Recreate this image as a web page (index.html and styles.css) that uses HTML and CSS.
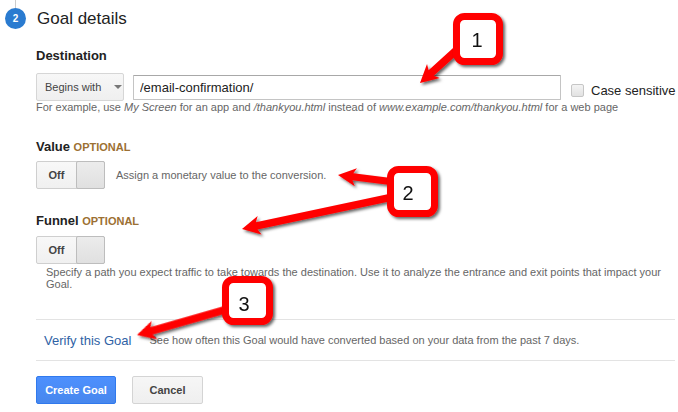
FILE: index.html
```html
<!DOCTYPE html>
<html lang="en">
<head>
  <meta charset="UTF-8">
  <meta name="viewport" content="width=device-width, initial-scale=1.0">
  <title>Goal details</title>

  <!-- Stylesheet -->
  <link rel="stylesheet" href="styles.css">
</head>
<body>
  <div class="page">
    <!-- Step header -->
    <div class="rail"></div>
    <div class="step-head">
      <span class="step-num">2</span>
      <h2 class="step-title">Goal details</h2>
    </div>

    <div class="step-body">
      <!-- Destination -->
      <div class="field-label first">Destination</div>
      <div class="dest-row">
        <div class="select">Begins with<span class="caret"></span></div>
        <input class="text-input" type="text" value="/email-confirmation/">
        <label class="check-label"><input type="checkbox" class="check">Case sensitive</label>
      </div>
      <p class="hint">For example, use <i>My Screen</i> for an app and <i>/thankyou.html</i> instead of <i>www.example.com/thankyou.html</i> for a web page</p>

      <!-- Value -->
      <div class="field-label value-label">Value <span class="optional">OPTIONAL</span></div>
      <div class="toggle-row">
        <div class="toggle"><span class="toggle-off">Off</span><span class="toggle-knob"></span></div>
        <span class="toggle-note">Assign a monetary value to the conversion.</span>
      </div>

      <!-- Funnel -->
      <div class="field-label funnel-label">Funnel <span class="optional">OPTIONAL</span></div>
      <div class="toggle-row funnel-toggle">
        <div class="toggle"><span class="toggle-off">Off</span><span class="toggle-knob"></span></div>
      </div>
      <p class="funnel-hint">Specify a path you expect traffic to take towards the destination. Use it to analyze the entrance and exit points that impact your Goal.</p>

      <!-- Verify -->
      <div class="verify">
        <a class="verify-link" href="#">Verify this Goal</a>
        <span class="verify-note">See how often this Goal would have converted based on your data from the past 7 days.</span>
      </div>

      <!-- Buttons -->
      <div class="actions">
        <button class="btn btn-primary">Create Goal</button>
        <button class="btn">Cancel</button>
      </div>
    </div>

    <!-- Annotation callouts drawn over the form -->
    <svg class="callouts" width="678" height="412" viewBox="0 0 678 412">
      <defs>
        <filter id="shade" x="-20%" y="-20%" width="150%" height="150%">
          <feDropShadow dx="2" dy="2" stdDeviation="1.4" flood-color="#000" flood-opacity="0.6"/>
        </filter>
      </defs>
      <g fill="#ff0000" filter="url(#shade)">
        <path transform="translate(420,83) rotate(-42)" d="M0,0 L18,-9.5 L15,-3.8 L55,-3.8 L55,3.8 L15,3.8 L18,9.5 Z"/>
        <path transform="translate(338,175) rotate(7)" d="M0,0 L18,-9 L15,-3.5 L55,-3.5 L55,3.5 L15,3.5 L18,9 Z"/>
        <path transform="translate(242,229) rotate(-12)" d="M0,0 L18,-9.5 L15,-3.8 L152,-3.8 L152,3.8 L15,3.8 L18,9.5 Z"/>
        <path transform="translate(137,335) rotate(-16)" d="M0,0 L18,-9.5 L15,-3.8 L92,-3.8 L92,3.8 L15,3.8 L18,9.5 Z"/>
      </g>
      <g fill="#fff" stroke="#ff0000" stroke-width="7" filter="url(#shade)">
        <rect x="456.5" y="16.5" width="43" height="45" rx="8"/>
        <rect x="390.5" y="169.5" width="44" height="44" rx="8"/>
        <rect x="225.5" y="279.5" width="44" height="42" rx="8"/>
      </g>
      <g class="callout-num" text-anchor="middle">
        <text x="477" y="47">1</text>
        <text x="408" y="200">2</text>
        <text x="244" y="311">3</text>
      </g>
    </svg>
  </div>
</body>
</html>
```

FILE: styles.css
```css
/* Page base */
body {
  margin: 0;
  background: #fff;
  font-family: 'Liberation Sans', Arial, sans-serif;
  color: #222;
}

.page {
  position: relative;
  width: 678px;
  height: 412px;
  overflow: hidden;
}

/* Step header */
.rail {
  width: 1px;
  height: 8px;
  margin-left: 15px;
  background: #ccc;
}

.step-head {
  display: flex;
  align-items: center;
  height: 21px;
}

.step-num {
  width: 21px;
  height: 21px;
  margin-left: 5px;
  border-radius: 50%;
  background: #2a7bd0;
  color: #fff;
  font-size: 10px;
  font-weight: bold;
  line-height: 21px;
  text-align: center;
}

.step-title {
  margin: 0 0 0 11px;
  font-size: 17px;
  font-weight: normal;
  line-height: 21px;
  color: #222;
}

/* Form body */
.step-body {
  width: 639px;
  padding-left: 36px;
}

.field-label {
  font-size: 13px;
  font-weight: bold;
  line-height: 16px;
  color: #222;
}

.field-label.first {
  margin-top: 19px;
}

.value-label {
  margin-top: 25px;
}

.funnel-label {
  margin-top: 24px;
}

.optional {
  font-size: 11px;
  color: #9c7032;
}

/* Destination row */
.dest-row {
  display: flex;
  align-items: center;
  margin-top: 9px;
  height: 28px;
}

.select {
  display: flex;
  align-items: center;
  flex-shrink: 0;
  box-sizing: border-box;
  width: 88px;
  height: 28px;
  padding-left: 8px;
  border: 1px solid #d6d6d6;
  border-radius: 2px;
  background: linear-gradient(#f7f7f7, #efefef);
  font-size: 11px;
  color: #444;
}

.caret {
  width: 0;
  height: 0;
  margin-left: 13px;
  border-left: 4px solid transparent;
  border-right: 4px solid transparent;
  border-top: 4px solid #777;
}

.text-input {
  flex-shrink: 0;
  box-sizing: border-box;
  width: 428px;
  height: 25px;
  margin: 0 0 0 9px;
  padding: 0 6px;
  border: 1px solid #c4c4c4;
  border-top-color: #a8a8a8;
  border-radius: 1px;
  font-family: inherit;
  font-size: 13px;
  color: #222;
  outline: none;
}

.check-label {
  display: flex;
  align-items: center;
  flex-shrink: 0;
  margin: 6px 0 0 10px;
  font-size: 13px;
  white-space: nowrap;
  color: #222;
}

.check {
  appearance: none;
  width: 13px;
  height: 13px;
  margin: 0 7px 0 0;
  border: 1px solid #c6c6c6;
  border-radius: 2px;
  background: linear-gradient(#f4f4f4, #e2e2e2);
}

.hint {
  margin: 0;
  font-size: 11px;
  line-height: 13px;
  white-space: nowrap;
  color: #666;
}

/* Toggles */
.toggle-row {
  display: flex;
  align-items: center;
  margin-top: 6px;
}

.funnel-toggle {
  margin-top: 7px;
}

.toggle {
  display: flex;
  box-sizing: border-box;
  width: 69px;
  height: 28px;
  border: 1px solid #cfcfcf;
  border-radius: 2px;
  background: linear-gradient(#f8f8f8, #f0f0f0);
}

.toggle-off {
  width: 39px;
  font-size: 11px;
  font-weight: bold;
  line-height: 26px;
  text-align: center;
  color: #444;
}

.toggle-knob {
  flex: 1;
  margin: -1px -1px -1px 0;
  border: 1px solid #bdbdbd;
  border-radius: 2px;
  background: linear-gradient(#ececec, #e0e0e0);
}

.toggle-note {
  margin-left: 11px;
  font-size: 11px;
  color: #666;
}

.funnel-hint {
  width: 620px;
  margin: 2px 0 0;
  padding-left: 10px;
  font-size: 11px;
  line-height: 12px;
  color: #666;
}

/* Verify row */
.verify {
  display: flex;
  align-items: center;
  height: 40px;
  margin-top: 29px;
  padding-left: 8px;
  border-top: 1px solid #e3e3e3;
  border-bottom: 1px solid #e3e3e3;
}

.verify-link {
  font-size: 13px;
  color: #2f62a5;
  text-decoration: none;
}

.verify-note {
  margin-left: 18px;
  font-size: 11px;
  color: #666;
}

/* Buttons */
.actions {
  display: flex;
  gap: 16px;
  margin-top: 15px;
}

.btn {
  box-sizing: border-box;
  height: 28px;
  width: 71px;
  padding: 0;
  border: 1px solid #d4d4d4;
  border-radius: 2px;
  background: linear-gradient(#f6f6f6, #efefef);
  font-family: inherit;
  font-size: 11px;
  font-weight: bold;
  color: #444;
}

.btn-primary {
  width: 80px;
  border-color: #3079ed;
  background: linear-gradient(#4d90fe, #4787ed);
  color: #fff;
}

/* Annotation overlay */
.callouts {
  position: absolute;
  top: 0;
  left: 0;
  pointer-events: none;
}

.callout-num {
  font-family: 'Liberation Sans', Arial, sans-serif;
  font-size: 20px;
  fill: #111;
}
```
